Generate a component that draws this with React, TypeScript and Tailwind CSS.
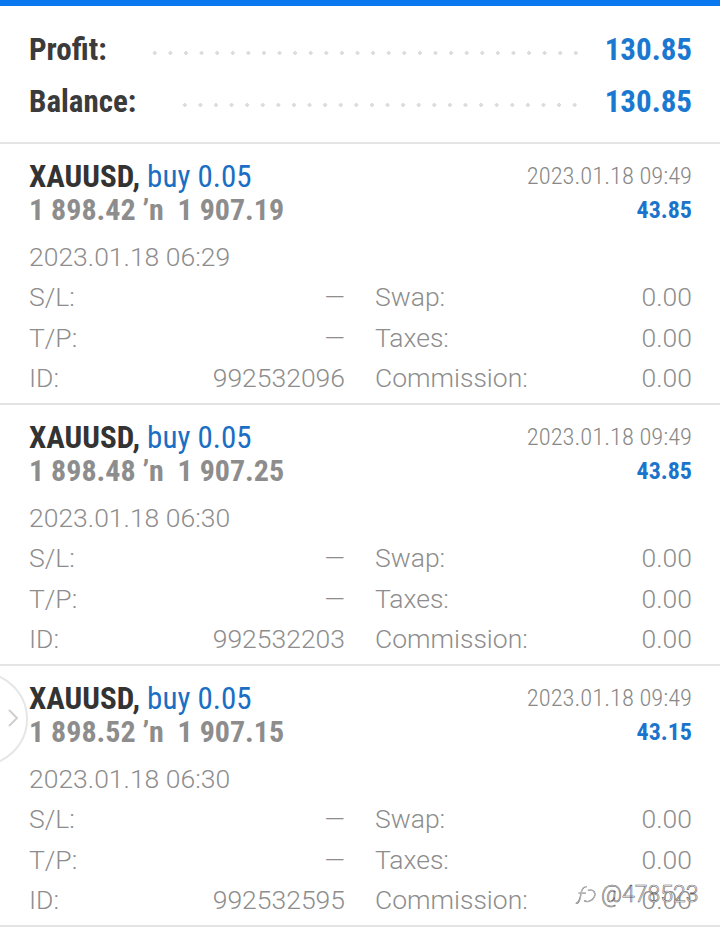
const cond = "font-['Roboto_Condensed',Roboto,sans-serif]";
const reg = "font-[Roboto,'Roboto_Condensed',sans-serif]";

type Trade = {
  open: string;
  close: string;
  openTime: string;
  closeTime: string;
  profit: string;
  id: string;
};

const trades: Trade[] = [
  { open: "1 898.42", close: "1 907.19", openTime: "2023.01.18 06:29", closeTime: "2023.01.18 09:49", profit: "43.85", id: "992532096" },
  { open: "1 898.48", close: "1 907.25", openTime: "2023.01.18 06:30", closeTime: "2023.01.18 09:49", profit: "43.85", id: "992532203" },
  { open: "1 898.52", close: "1 907.15", openTime: "2023.01.18 06:30", closeTime: "2023.01.18 09:49", profit: "43.15", id: "992532595" },
];

function SummaryRow({ label, value, dotsMl }: { label: string; value: string; dotsMl: string }) {
  return (
    <div className="flex h-[52px] items-center">
      <span className={`${cond} text-[31px] font-bold text-[#3b3b3b] leading-none`}>{label}</span>
      <div
        className={`${dotsMl} mr-[22px] mt-[8px] h-[6px] flex-1 bg-[radial-gradient(circle,#dcdcdc_1.6px,transparent_2px)] bg-[length:15.6px_6px] bg-repeat-x`}
      />
      <span className={`${cond} text-[31px] font-bold text-[#1b78d0] leading-none`}>{value}</span>
    </div>
  );
}

function DetailRow({ l1, v1, l2, v2 }: { l1: string; v1: string; l2: string; v2: string }) {
  return (
    <div className={`${reg} flex h-[40.5px] items-center text-[26.5px] font-light text-[#8d8d8d]`}>
      <div className="flex w-[316px] justify-between">
        <span>{l1}</span>
        <span>{v1}</span>
      </div>
      <div className="ml-[30px] flex flex-1 justify-between">
        <span>{l2}</span>
        <span>{v2}</span>
      </div>
    </div>
  );
}

function TradeCard({ t }: { t: Trade }) {
  return (
    <div className="border-b-2 border-[#e4e4e4] pl-[29px] pr-[28px] pt-[16px] pb-[4.5px]">
      <div className="flex h-[33px] items-center justify-between">
        <div className={`${cond} text-[31px] leading-none`}>
          <span className="font-bold text-[#333333]">XAUUSD,</span>{" "}
          <span className="text-[#1a6fc4]">buy 0.05</span>
        </div>
        <span className={`${cond} text-[24.5px] font-light text-[#888888] leading-none`}>{t.closeTime}</span>
      </div>
      <div className="flex h-[33px] items-center justify-between">
        <span className={`${cond} text-[30px] font-bold text-[#8d8d8d] leading-none whitespace-pre`}>
          {t.open} ʼn  {t.close}
        </span>
        <span className={`${cond} text-[24px] font-bold text-[#1b74cc] leading-none`}>{t.profit}</span>
      </div>
      <div className={`${reg} mt-[11px] flex h-10 items-center text-[26.5px] font-light text-[#8d8d8d]`}>
        {t.openTime}
      </div>
      <DetailRow l1="S/L:" v1="—" l2="Swap:" v2="0.00" />
      <DetailRow l1="T/P:" v1="—" l2="Taxes:" v2="0.00" />
      <DetailRow l1="ID:" v1={t.id} l2="Commission:" v2="0.00" />
    </div>
  );
}

export default function App() {
  return (
    <div className="relative h-[935px] w-[720px] overflow-hidden bg-white">
      <div className="h-[6px] bg-[#0a78ee]" />
      <div className="border-b-2 border-[#e4e4e4] pl-[29px] pr-[28px] pt-[17px] pb-[15px]">
        <SummaryRow label="Profit:" value="130.85" dotsMl="ml-[40px]" />
        <SummaryRow label="Balance:" value="130.85" dotsMl="ml-[41px]" />
      </div>
      {trades.map((t) => (
        <TradeCard key={t.id} t={t} />
      ))}

      {/* side handle overlay */}
      <div className="absolute left-[-66px] top-[672px] h-[94px] w-[94px] rounded-full border-2 border-[#e6e6e6]" />
      <svg className="absolute left-[6px] top-[707px]" width="14" height="22" viewBox="0 0 14 22">
        <path d="M3 3 L11 11 L3 19" fill="none" stroke="#cfcfcf" strokeWidth="2" />
      </svg>

      {/* watermark */}
      <div className="absolute left-[572px] top-[878px] flex items-center text-[23px] font-[Roboto,sans-serif] font-light text-white [-webkit-text-stroke:0.6px_#666]">
        <svg width="28" height="26" viewBox="0 0 30 26" className="mr-[1px]">
          <path d="M4 22 C8 22 9 16 10 10 C11 5 13 4 16 4 M7 11 L15 11 M17 8 C22 6 26 10 24 15 C22 20 16 21 13 19" fill="none" stroke="#666" strokeWidth="1.4" />
          <path d="M4 22 C8 22 9 16 10 10 C11 5 13 4 16 4 M7 11 L15 11 M17 8 C22 6 26 10 24 15 C22 20 16 21 13 19" fill="none" stroke="#fff" strokeWidth="0.6" />
        </svg>
        <span>@478523</span>
      </div>
    </div>
  );
}
